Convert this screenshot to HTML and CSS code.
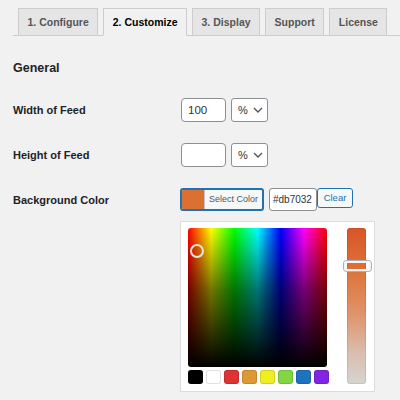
FILE: index.html
```html
<!DOCTYPE html>
<html>
<head>
<meta charset="utf-8">
<link rel="stylesheet" href="styles.css">
</head>
<body>
<div class="page">
  <nav class="tabs">
    <span class="tab">1. Configure</span>
    <span class="tab active">2. Customize</span>
    <span class="tab">3. Display</span>
    <span class="tab">Support</span>
    <span class="tab">License</span>
  </nav>
  <h2 class="heading">General</h2>
  <div class="row">
    <label class="label">Width of Feed</label>
    <div class="controls">
      <span class="input num">100</span>
      <span class="select">% <svg class="chev" width="10" height="6" viewBox="0 0 10 6"><path d="M1 1l4 4 4-4" fill="none" stroke="#50575e" stroke-width="1.4"/></svg></span>
    </div>
  </div>
  <div class="row">
    <label class="label">Height of Feed</label>
    <div class="controls">
      <span class="input num"></span>
      <span class="select">% <svg class="chev" width="10" height="6" viewBox="0 0 10 6"><path d="M1 1l4 4 4-4" fill="none" stroke="#50575e" stroke-width="1.4"/></svg></span>
    </div>
  </div>
  <div class="row color-row">
    <label class="label">Background Color</label>
    <div class="color-col">
      <div class="controls">
        <span class="color-btn"><span class="swatch-cur"></span><span class="btn-text">Select Color</span></span>
        <span class="hex">#db7032</span>
        <span class="clear">Clear</span>
      </div>
      <div class="picker">
        <div class="left">
          <div class="square"><span class="marker"></span></div>
          <div class="palette">
            <span class="sw" style="background:#000000"></span>
            <span class="sw" style="background:#ffffff"></span>
            <span class="sw" style="background:#dd3333"></span>
            <span class="sw" style="background:#dd9933"></span>
            <span class="sw" style="background:#eeee22"></span>
            <span class="sw" style="background:#81d742"></span>
            <span class="sw" style="background:#1e73be"></span>
            <span class="sw" style="background:#8224e3"></span>
          </div>
        </div>
        <div class="slider"><span class="handle"></span></div>
      </div>
    </div>
  </div>
</div>
</body>
</html>
```
FILE: styles.css
```css
html, body {
  margin: 0;
  background: #f1f1f1;
  font-family: "Liberation Sans", Arial, sans-serif;
  color: #1d2327;
}
.page {
  padding: 8px 0 0 13px;
}
.tabs {
  display: flex;
  gap: 5px;
  padding-left: 5px;
  border-bottom: 1px solid #cccccc;
  height: 27px;
}
.tab {
  box-sizing: border-box;
  flex-shrink: 0;
  white-space: nowrap;
  height: 28px;
  padding: 0 8.5px;
  line-height: 26px;
  border: 1px solid #cccccc;
  background: #e5e5e5;
  font-size: 10.5px;
  font-weight: bold;
  color: #555555;
}
.tab.active {
  background: #f1f1f1;
  border-bottom-color: #f1f1f1;
  color: #000000;
}
.heading {
  margin: 22px 0 0 0;
  font-size: 12.5px;
  line-height: 20px;
  font-weight: bold;
  color: #1d2327;
}
.row {
  display: flex;
  align-items: center;
  margin-top: 20px;
}
.row + .row {
  margin-top: 21px;
}
.label {
  width: 167px;
  font-size: 11px;
  font-weight: bold;
  color: #1d2327;
}
.color-row {
  align-items: flex-start;
}
.color-row .label {
  line-height: 24px;
}
.controls {
  display: flex;
  align-items: center;
}
.row > .controls {
  padding-left: 1px;
}
.input {
  box-sizing: border-box;
  width: 45px;
  height: 24px;
  border: 1px solid #8c8f94;
  border-radius: 4px;
  background: #ffffff;
  font-size: 11.5px;
  line-height: 22px;
  padding-left: 6px;
  color: #2c3338;
}
.select {
  box-sizing: border-box;
  width: 37px;
  height: 24px;
  margin-left: 5px;
  border: 1px solid #8c8f94;
  border-radius: 3px;
  background: #ffffff;
  font-size: 11px;
  line-height: 22px;
  padding-left: 6px;
  color: #2c3338;
  display: flex;
  align-items: center;
  gap: 5px;
}
.chev {
  display: block;
}
.color-btn {
  box-sizing: border-box;
  display: flex;
  width: 84px;
  height: 23px;
  border: 2px solid #2271b1;
  border-radius: 3px;
  overflow: hidden;
  background: #f6f7f7;
}
.swatch-cur {
  width: 22px;
  background: #db7032;
}
.btn-text {
  flex: 1;
  font-size: 9px;
  line-height: 19px;
  color: #50575e;
  text-align: center;
  border-left: 1px solid #c3c4c7;
}
.hex {
  box-sizing: border-box;
  width: 48px;
  height: 23px;
  margin-left: 5px;
  border: 1px solid #8c8f94;
  border-radius: 3px;
  background: #ffffff;
  font-size: 10px;
  line-height: 21px;
  padding-left: 3px;
  color: #2c3338;
}
.clear {
  box-sizing: border-box;
  align-self: flex-start;
  width: 36px;
  height: 20px;
  border: 1px solid #2271b1;
  border-radius: 3px;
  background: #f6f7f7;
  font-size: 9.5px;
  line-height: 18px;
  text-align: center;
  color: #2271b1;
}
.picker {
  box-sizing: border-box;
  display: flex;
  gap: 18px;
  width: 195px;
  height: 171px;
  margin-top: 10px;
  padding: 6px 8px 0 7px;
  border: 1px solid #dcdcde;
  background: #ffffff;
}
.square {
  position: relative;
  width: 139px;
  height: 139px;
  border-radius: 3px;
  background:
    linear-gradient(to bottom, rgba(0,0,0,0) 0%, rgba(0,0,0,0.55) 45%, #000000 100%),
    linear-gradient(to right, #ff0000 0%, #ffff00 16.7%, #00ff00 33.3%, #00ffff 50%, #0000ff 66.7%, #ff00ff 83.3%, #ff0000 100%);
}
.marker {
  position: absolute;
  left: 2px;
  top: 16px;
  width: 10px;
  height: 10px;
  border: 2px solid #e8e4dc;
  border-radius: 50%;
}
.palette {
  display: flex;
  gap: 3px;
  margin-top: 3px;
}
.sw {
  box-sizing: border-box;
  width: 15px;
  height: 14px;
  border-radius: 3px;
  box-shadow: inset 0 0 0 1px rgba(0,0,0,0.12);
}
.slider {
  position: relative;
  width: 21px;
  height: 156px;
  border-radius: 3px;
  background: linear-gradient(to bottom, #d9552a 0%, #dd7036 25%, #e0936a 55%, #d9beae 80%, #d6d4d2 100%);
  box-shadow: inset 0 0 0 1px rgba(0,0,0,0.08);
}
.handle {
  box-sizing: border-box;
  position: absolute;
  left: -3px;
  top: 33px;
  width: 27px;
  height: 10px;
  border: 2px solid #f4f4f4;
  border-radius: 3px;
  box-shadow: 0 0 0 1px #b0b0b0;
}
```
